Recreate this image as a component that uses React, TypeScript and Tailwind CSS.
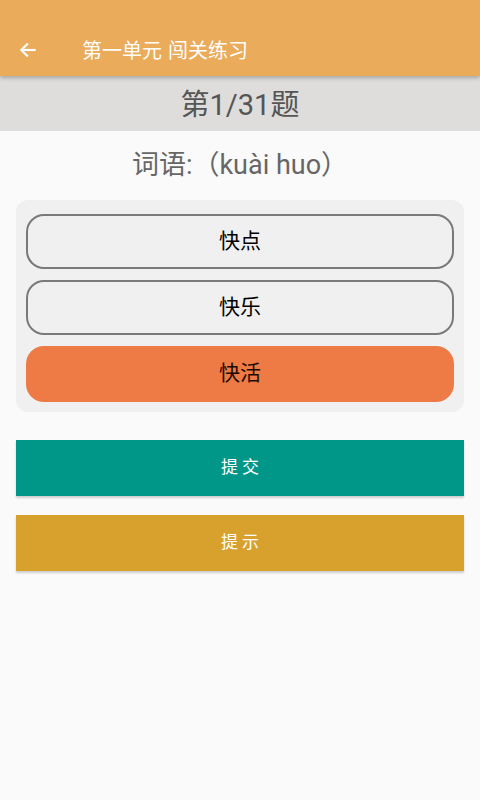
const options = [
  { label: "快点", selected: false },
  { label: "快乐", selected: false },
  { label: "快活", selected: true },
];

export default function App() {
  return (
    <div
      className="w-[480px] h-[800px] bg-[#fafafa] flex flex-col"
      style={{ fontFamily: 'Roboto, "Noto Sans CJK SC", sans-serif' }}
    >
      {/* App bar */}
      <header className="h-[76px] bg-[#eaab5a] flex items-end pb-[12px] shadow-[0_2px_4px_rgba(0,0,0,0.25)] relative z-10">
        <svg
          className="ml-[18px] mb-[4px]"
          width="20"
          height="20"
          viewBox="0 0 24 24"
          fill="none"
          stroke="#fff"
          strokeWidth="2.6"
          strokeLinecap="square"
        >
          <path d="M20 12H5" />
          <path d="M11 5l-7 7 7 7" />
        </svg>
        <h1 className="ml-[44px] text-white text-[20px] leading-[26px]">
          第一单元<span className="ml-[6px]">闯关练习</span>
        </h1>
      </header>

      {/* Progress band */}
      <div className="h-[55px] bg-[#dedddc] flex items-center justify-center pt-[3px]">
        <span className="text-[29px] text-[#555] leading-none">第1/31题</span>
      </div>

      {/* Question */}
      <div className="h-[69px] flex items-center justify-center">
        <span className="text-[27px] text-[#666] leading-none">词语:（kuài huo）</span>
      </div>

      {/* Options card */}
      <div className="mx-4 bg-[#f0f0f0] rounded-[12px] px-[10px] pt-[14px] pb-[10px] flex flex-col gap-[11px]">
        {options.map((o) =>
          o.selected ? (
            <div
              key={o.label}
              className="h-[56px] rounded-[18px] bg-[#ee7a45] flex items-center justify-center text-[21px] text-[#1a0a00]"
            >
              {o.label}
            </div>
          ) : (
            <div
              key={o.label}
              className="h-[55px] rounded-[18px] border-2 border-[#7a7a7a] flex items-center justify-center text-[21px] text-black"
            >
              {o.label}
            </div>
          )
        )}
      </div>

      {/* Action buttons */}
      <div className="mx-4 mt-[28px] flex flex-col gap-[19px]">
        <button className="h-[56px] bg-[#009688] text-white text-[17px] tracking-[4px] pl-[4px] shadow-[0_2px_2px_rgba(0,0,0,0.18)]">
          提交
        </button>
        <button className="h-[56px] bg-[#d8a02c] text-white text-[17px] tracking-[4px] pl-[4px] shadow-[0_2px_2px_rgba(0,0,0,0.18)]">
          提示
        </button>
      </div>
    </div>
  );
}
